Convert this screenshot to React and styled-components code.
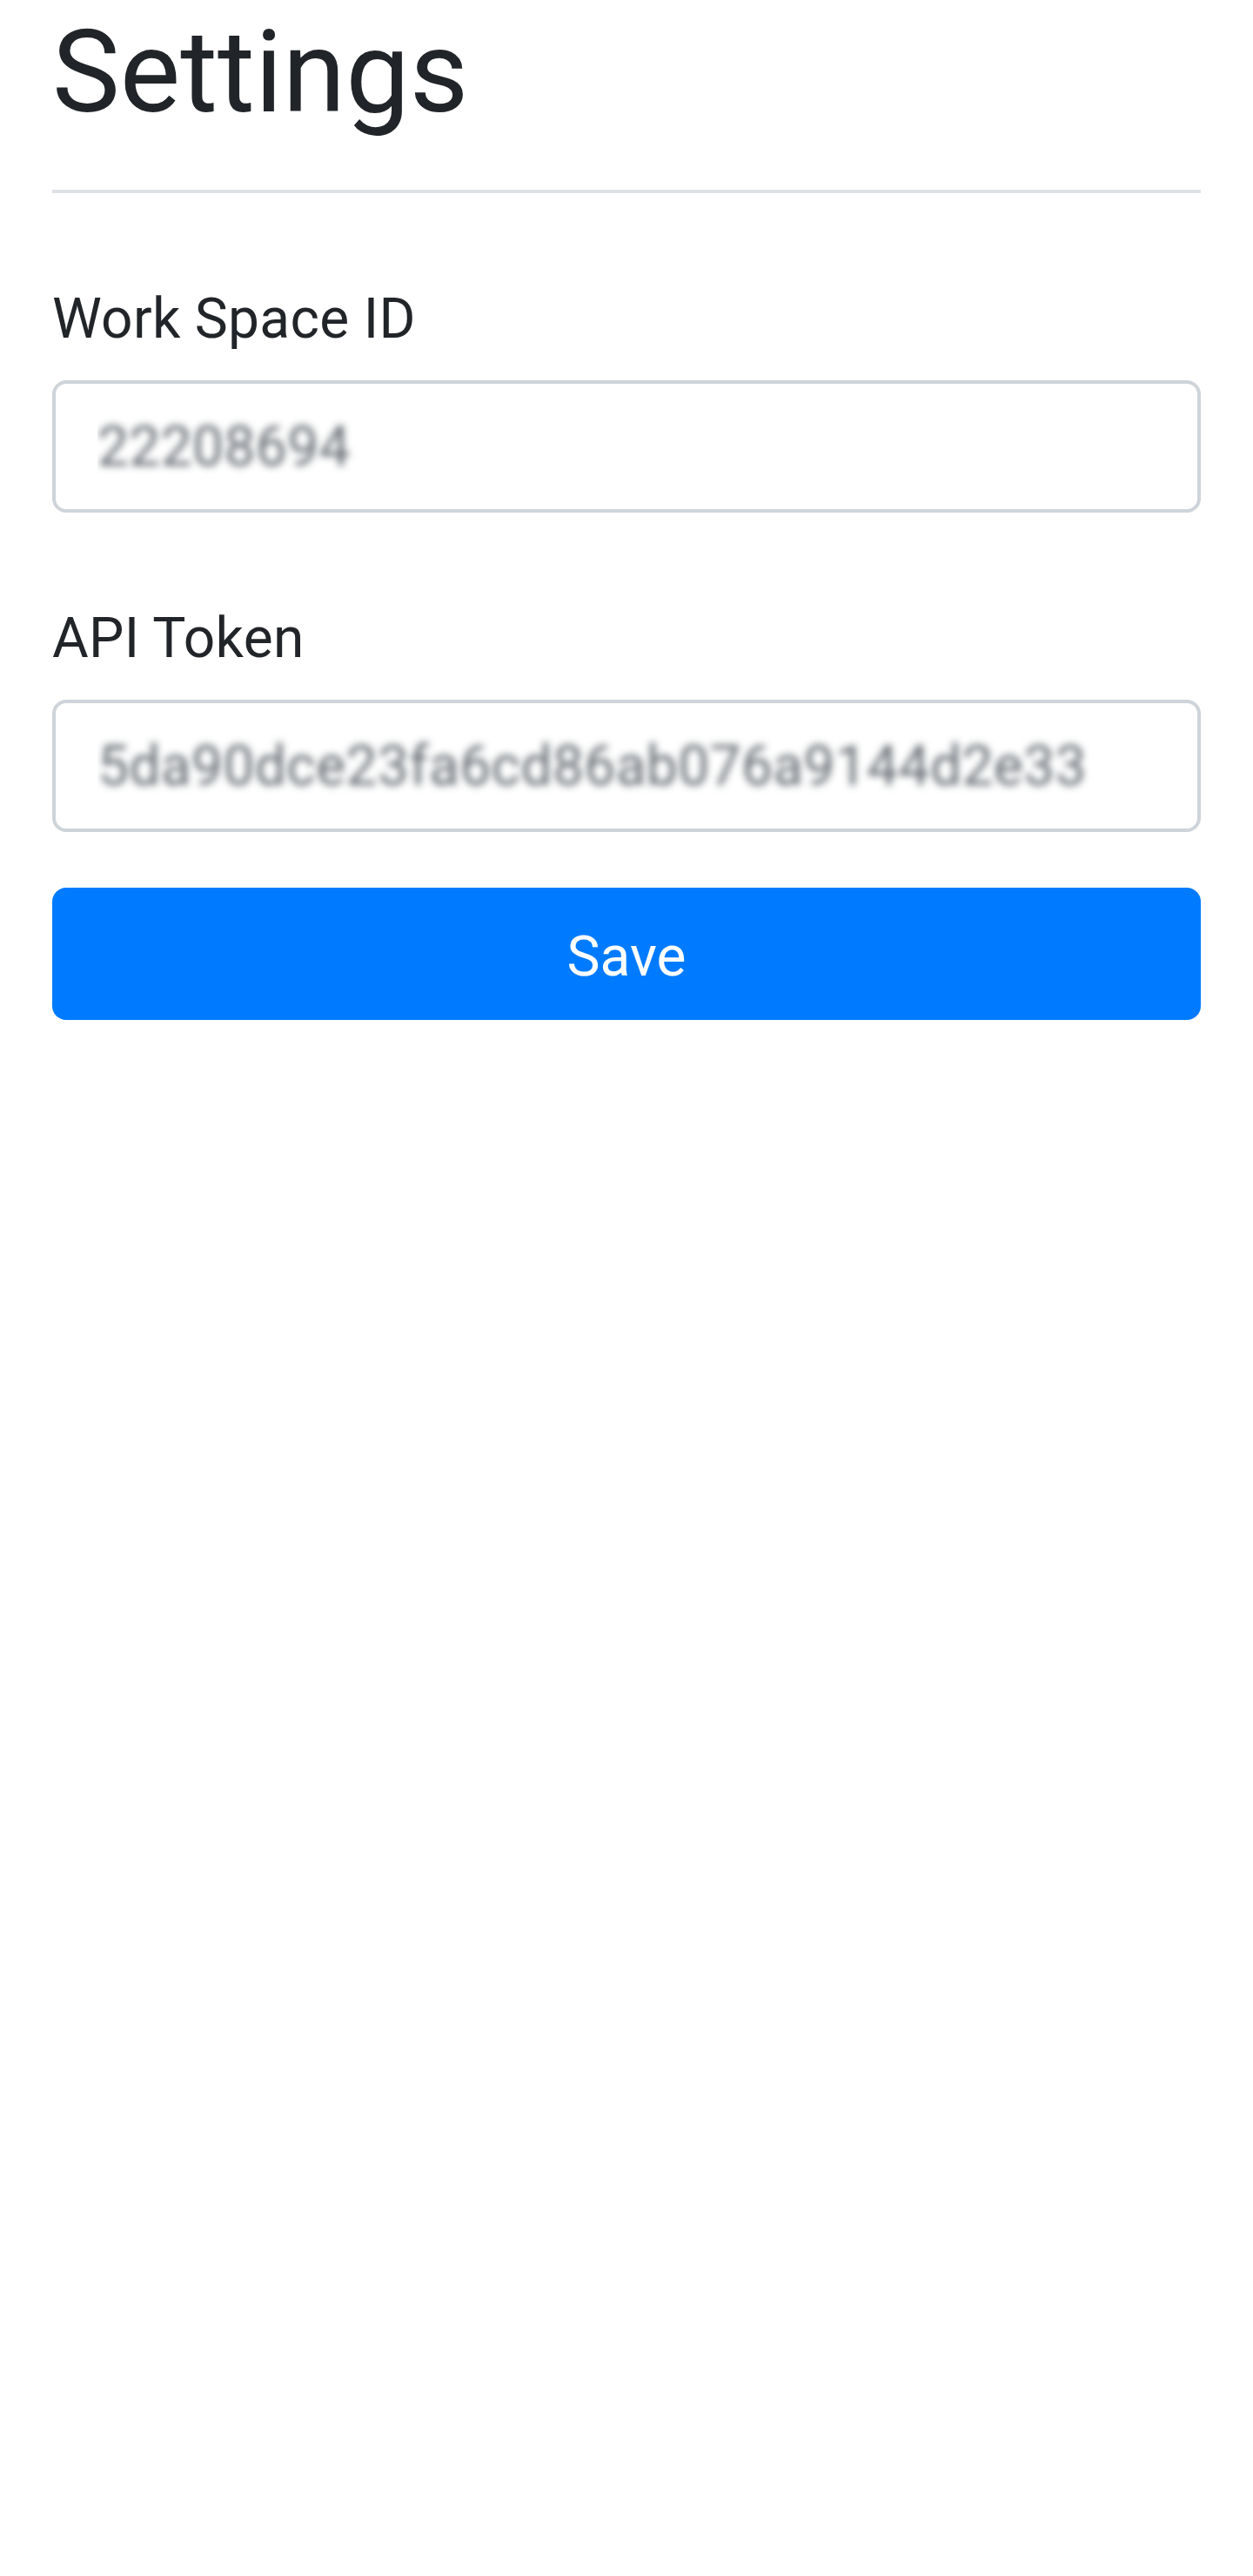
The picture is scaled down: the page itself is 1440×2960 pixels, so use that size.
import styled, { createGlobalStyle } from "styled-components";

const GlobalStyle = createGlobalStyle`
  html, body {
    margin: 0;
    padding: 0;
    background: #ffffff;
  }
  body {
    font-family: Roboto, "Liberation Sans", sans-serif;
    color: #212529;
  }
`;

export default function App() {
  return (
    <>
      <GlobalStyle />
      <Page>
        <Title>Settings</Title>
        <Divider />
        <Form onSubmit={(e) => e.preventDefault()}>
          <Field>
            <Label htmlFor="workspace">Work Space ID</Label>
            <Input id="workspace" type="text" defaultValue="22208694" />
          </Field>
          <Field>
            <Label htmlFor="token">API Token</Label>
            <Input id="token" type="text" defaultValue="5da90dce23fa6cd86ab076a9144d2e33" />
          </Field>
          <SaveButton type="submit">Save</SaveButton>
        </Form>
      </Page>
    </>
  );
}

const Page = styled.div`
  box-sizing: border-box;
  width: 100%;
  min-height: 2960px;
  padding: 6px 60px 0;
`;

const Title = styled.h1`
  margin: 0;
  font-size: 131px;
  font-weight: 400;
  line-height: 154px;
  color: #212529;
`;

const Divider = styled.hr`
  margin: 58px 0 0;
  height: 0;
  border: 0;
  border-top: 4px solid #dee2e6;
`;

const Form = styled.form`
  display: flex;
  flex-direction: column;
  margin-top: 97px;
`;

const Field = styled.div`
  display: flex;
  flex-direction: column;
  & + & {
    margin-top: 97px;
  }
`;

const Label = styled.label`
  font-size: 64px;
  line-height: 96px;
  letter-spacing: 0.3px;
  margin-bottom: 22px;
  color: #212529;
`;

const Input = styled.input`
  box-sizing: border-box;
  width: 100%;
  height: 152px;
  padding: 0 48px;
  border: 4px solid #ced4da;
  border-radius: 16px;
  background: #ffffff;
  font-family: Roboto, "Liberation Sans", sans-serif;
  font-size: 64px;
  letter-spacing: 0.4px;
  color: transparent;
  text-shadow: 0 0 9px rgba(73, 80, 87, 0.85);
  outline: none;
`;

const SaveButton = styled.button`
  box-sizing: border-box;
  width: 100%;
  height: 152px;
  margin-top: 64px;
  padding: 8px 0 0;
  border: 0;
  border-radius: 16px;
  background: #007bff;
  color: #ffffff;
  font-family: Roboto, "Liberation Sans", sans-serif;
  font-size: 64px;
  line-height: 144px;
  cursor: pointer;
`;
